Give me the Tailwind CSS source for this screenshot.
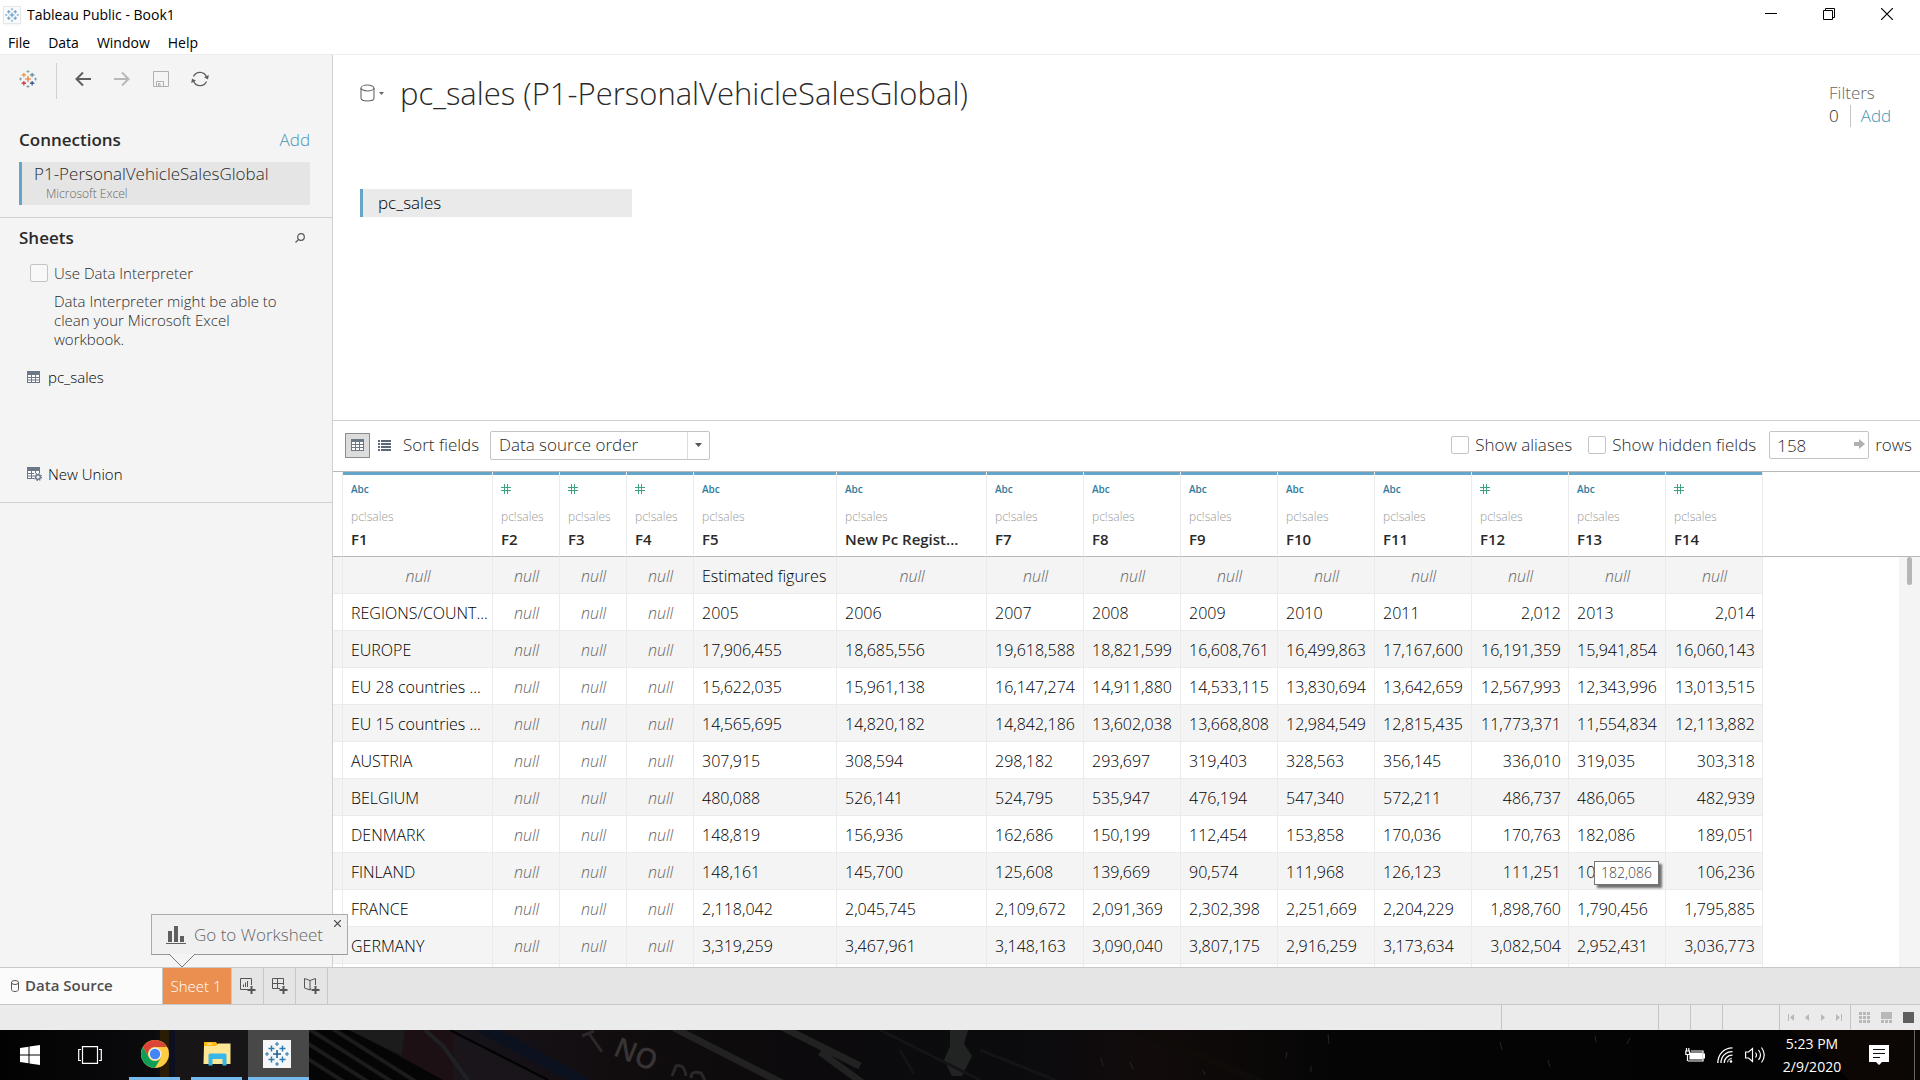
<!DOCTYPE html>
<html lang="en">
<head>
<meta charset="utf-8">
<meta name="viewport" content="width=device-width, initial-scale=1">
<title>Tableau Public - Book1</title>
<script src="https://cdn.jsdelivr.net/npm/@tailwindcss/browser@4"></script>
</head>
<body class="flex h-screen flex-col overflow-hidden bg-white font-['Open_Sans','Noto_Sans',sans-serif] font-[350] text-[#2a2a2a]">

<svg class="hidden" aria-hidden="true">
  <symbol id="marks" viewBox="0 0 24 24">
    <g fill="none">
      <path class="stroke-(--c1)" stroke-width="1.6" d="M12 8v8M8 12h8"/>
      <path class="stroke-(--c2)" stroke-width="1.4" d="M6.5 3.5v6M3.500 6.500h6"/>
      <path class="stroke-(--c3)" stroke-width="1.4" d="M17.500 3.500v6M14.500 6.500h6"/>
      <path class="stroke-(--c4)" stroke-width="1.4" d="M6.500 14.500v6M3.500 17.500h6"/>
      <path class="stroke-(--c5)" stroke-width="1.4" d="M17.500 14.500v6M14.500 17.500h6"/>
      <path class="stroke-(--c6)" stroke-width="1.1" d="M12 0v4M10 2h4M12 20v4M10 22h4M2 10v4M0 12h4M22 10v4M20 12h4"/>
    </g>
  </symbol>
</svg>

<!-- Title bar -->
<header class="flex h-7 shrink-0 items-center justify-between pl-[3px]">
  <div class="flex items-center gap-1.5 pt-0.5 text-sm font-normal text-black">
    <svg class="size-[18px] border border-gray-200 bg-gray-50 p-px shadow-xs [--c1:#4a8db8] [--c2:#4a8db8] [--c3:#4a8db8] [--c4:#4a8db8] [--c5:#4a8db8] [--c6:#6ba3c7]"><use href="#marks"/></svg>
    <h1>Tableau Public - Book1</h1>
  </div>
  <div class="flex text-black">
    <button aria-label="Minimize" class="flex h-7 w-[58px] items-center justify-center"><svg class="h-3 w-3" viewBox="0 0 12 12" stroke="currentColor" fill="none"><path d="M0 5.500h12"/></svg></button>
    <button aria-label="Restore" class="flex h-7 w-[58px] items-center justify-center"><svg class="h-3 w-3" viewBox="0 0 12 12" stroke="currentColor" fill="none"><path d="M.5 2.500h9v9h-9zM2.500 2.500v-2h9v9h-2"/></svg></button>
    <button aria-label="Close" class="flex h-7 w-[62px] items-center justify-center pr-1"><svg class="h-3 w-3" viewBox="0 0 12 12" stroke="currentColor" stroke-width="1.200" fill="none"><path d="M0 0l12 12M12 0L0 12"/></svg></button>
  </div>
</header>

<!-- Menu -->
<nav class="flex h-[27px] shrink-0 items-center gap-[18px] border-b border-[#ededed] pl-2 pt-1 text-sm font-normal text-black">
  <button>File</button><button>Data</button><button>Window</button><button>Help</button>
</nav>

<div class="flex min-h-0 flex-1">
  <!-- Sidebar -->
  <aside class="flex w-[333px] shrink-0 flex-col border-r border-[#d0d0d0] bg-[#f4f4f4]">
    <div class="flex h-12 items-center pl-[19px]">
      <button aria-label="Start page"><svg class="size-[18px] [--c1:#e8762c] [--c2:#eb912c] [--c3:#59879b] [--c4:#c72037] [--c5:#1f457e] [--c6:#7199a6]"><use href="#marks"/></svg></button>
      <span class="ml-[19px] mt-1 h-9 w-px bg-[#d0d0d0]"></span>
      <button aria-label="Back" class="ml-[18px]"><svg class="h-4 w-4" viewBox="0 0 16 16" fill="none" stroke="#5f5f5f" stroke-width="2"><path d="M16 8H1.500M8 1.500L1.500 8 8 14.500"/></svg></button>
      <button aria-label="Forward" class="ml-[23px]"><svg class="h-4 w-4" viewBox="0 0 16 16" fill="none" stroke="#b8b8b8" stroke-width="2"><path d="M0 8h14.500M8 1.500L14.500 8 8 14.500"/></svg></button>
      <button aria-label="Save" class="ml-[23px]"><svg class="h-4 w-4" viewBox="0 0 16 16" fill="none" stroke="#b0b0b0"><path d="M.5.5h15v15H.5zM3.500 15.500v-5h7v5M5.500 12.500h1.500v3H5.500z"/></svg></button>
      <button aria-label="Refresh" class="ml-[22px]"><svg class="h-4 w-[18px]" viewBox="0 0 18 16" fill="none" stroke="#5f5f5f" stroke-width="1.300"><path d="M2.500 5.500A7 7 0 0 1 15.500 6M15.500 10.500A7 7 0 0 1 2.500 10"/><path fill="#5f5f5f" stroke="none" d="M17.800 4l-.8 4.500-4-2.200zM.2 12l.8-4.500 4 2.200z"/></svg></button>
    </div>

    <section class="border-b border-[#d0d0d0] px-[19px] pb-3 pr-[22px] pt-6">
      <div class="flex items-center justify-between text-[17px] leading-[26px]">
        <h2 class="font-semibold">Connections</h2>
        <a href="#" class="text-[#4996b8]">Add</a>
      </div>
      <button class="mt-[9px] flex h-[43px] w-full flex-col border-l-[3px] border-[#65a5c9] bg-[#e5e5e5] pl-3 text-left">
        <span class="text-[17px] leading-6">P1-PersonalVehicleSalesGlobal</span>
        <span class="pl-3 text-xs leading-4 text-[#666]">Microsoft Excel</span>
      </button>
    </section>

    <section class="h-[285px] border-b border-[#d0d0d0] px-[19px] pt-[7px]">
      <div class="flex items-center justify-between pr-2">
        <h2 class="text-[17px] font-semibold leading-[26px]">Sheets</h2>
        <button aria-label="Search sheets"><svg class="h-[10px] w-[10px]" viewBox="0 0 10 10" fill="none" stroke="#555" stroke-width="1.200"><circle cx="6" cy="4" r="3.300"/><path d="M3.700 6.300L.5 9.500"/></svg></button>
      </div>
      <div class="mt-3 flex items-center gap-1.5 pl-[11px]">
        <input id="interp" type="checkbox" class="size-[18px] appearance-none rounded-xs border border-[#c4c4c4] bg-[#f8f8f8]">
        <label for="interp" class="text-[15px] leading-5">Use Data Interpreter</label>
      </div>
      <p class="mt-[9px] w-[270px] pl-[35px] text-[15px] leading-[19px]">Data Interpreter might be able to clean your Microsoft Excel workbook.</p>
      <button class="mt-[18px] flex items-center gap-2 pl-2 text-[15px] leading-5 text-black">
        <svg class="h-3 w-[13px]" viewBox="0 0 13 12"><path fill="#6b7787" d="M0 0h13v12H0z"/><path fill="#fff" d="M1 4h3v2H1zm4 0h3v2H5zm4 0h3v2H9zM1 7h3v1.500H1zm4 0h3v1.500H5zm4 0h3v1.500H9zM1 9.500h3V11H1zm4 0h3V11H5zm4 0h3V11H9z"/></svg>
        pc_sales
      </button>
      <button class="mt-[77px] flex items-center gap-1.5 pl-2 text-[15px] leading-5 text-black">
        <svg class="h-[14px] w-[15px]" viewBox="0 0 15 14"><path fill="#6b7787" d="M0 0h13v6H7v6H0z"/><path fill="#fff" d="M1 4h3v2H1zm4 0h3v2H5zm4 0h3v2H9zM1 7h3v1.500H1zm4 0h3v1.500H5zM1 9.500h3V11H1zm4 0h3V11H5z"/><circle cx="11" cy="10" r="3.800" fill="#f4f4f4"/><circle cx="11" cy="10" r="2.300" fill="none" stroke="#6b7787" stroke-width="1.400"/><circle cx="11" cy="10" r="3.400" fill="none" stroke="#6b7787" stroke-width="1.300" stroke-dasharray="1.300 1.370"/></svg>
        New Union
      </button>
    </section>
  </aside>

  <!-- Canvas and grid -->
  <main class="flex min-w-0 flex-1 flex-col">
    <section class="flex h-[366px] shrink-0 flex-col border-b border-[#d0d0d0] pl-[27px]">
      <div class="flex items-start justify-between pr-7 pt-4">
        <div class="flex items-center">
          <button aria-label="Data source menu" class="flex items-center gap-1">
            <svg class="h-[18px] w-[15px]" viewBox="0 0 15 18" fill="none" stroke="#666" stroke-width="1.100"><ellipse cx="7.500" cy="4" rx="6.500" ry="3"/><path d="M1 4v10c0 1.800 2.500 3 6.500 3s6.500-1.200 6.500-3V4"/></svg>
            <svg class="h-[3px] w-[5px]" viewBox="0 0 5 3"><path fill="#666" d="M0 0h5L2.500 3z"/></svg>
          </button>
          <h2 class="ml-4 text-[31px] leading-[44px]">pc_sales (P1-PersonalVehicleSalesGlobal)</h2>
        </div>
        <div class="mt-[10px] w-[63px] text-[17px] leading-[23px]">
          <div class="text-[#666]">Filters</div>
          <div class="flex items-center"><span>0</span><span class="ml-[11px] h-[22px] w-px bg-[#c4c4c4]"></span><a href="#" class="ml-2.5 text-[#4996b8]">Add</a></div>
        </div>
      </div>
      <button class="mt-[62px] h-7 w-[272px] border-l-[3px] border-[#65a5c9] bg-[#eaeaea] pl-[15px] text-left text-[17px] leading-7 text-black">pc_sales</button>
    </section>

    <div class="flex h-[51px] shrink-0 items-center justify-between border-b border-[#b8b8b8] pb-0.5 pl-3 pr-2 text-[17px]">
      <div class="flex items-center">
        <button aria-label="Grid view" class="flex size-[25px] items-center justify-center border border-[#8c8c8c] bg-[#dcdcdc]"><svg class="h-3 w-[13px]" viewBox="0 0 13 12"><path fill="#6b7787" d="M0 0h13v12H0z"/><path fill="#fff" d="M1 3h3v2H1zm4 0h3v2H5zm4 0h3v2H9zM1 6h3v2H1zm4 0h3v2H5zm4 0h3v2H9zM1 9h3v2H1zm4 0h3v2H5zm4 0h3v2H9z"/></svg></button>
        <button aria-label="List view" class="ml-2"><svg class="h-[11px] w-[13px]" viewBox="0 0 13 11" fill="#5c6878"><path d="M0 0h2v2H0zm3 0h10v2H3zM0 3h2v2H0zm3 0h10v2H3zM0 6h2v2H0zm3 0h10v2H3zM0 9h2v2H0zm3 0h10v2H3z"/></svg></button>
        <label for="sort" class="ml-3 w-[79px] whitespace-nowrap">Sort fields</label>
        <div class="relative ml-2">
          <select id="sort" class="h-[29px] w-[220px] appearance-none rounded-xs border border-[#c4c4c4] bg-white pl-2"><option>Data source order</option></select>
          <span class="pointer-events-none absolute inset-y-px right-px flex w-[22px] items-center justify-center border-l border-[#ddd]"><svg class="h-1 w-[7px]" viewBox="0 0 7 4"><path fill="#555" d="M0 0h7L3.500 4z"/></svg></span>
        </div>
      </div>
      <div class="flex items-center">
        <input id="aliases" type="checkbox" class="size-[18px] appearance-none rounded-xs border border-[#c4c4c4]">
        <label for="aliases" class="ml-1.5 w-[100px] whitespace-nowrap">Show aliases</label>
        <input id="hidden-fields" type="checkbox" class="ml-[13px] size-[18px] appearance-none rounded-xs border border-[#c4c4c4]">
        <label for="hidden-fields" class="ml-1.5 w-[145px] whitespace-nowrap">Show hidden fields</label>
        <div class="relative ml-3">
          <input id="rows" value="158" class="block h-7 w-[100px] rounded-xs border border-[#c4c4c4] pl-[7px]">
          <svg class="absolute right-1 top-2 h-[10px] w-[11px]" viewBox="0 0 11 10"><path fill="#b0b0b0" d="M0 3h5V0l6 5-6 5V7H0z"/></svg>
        </div>
        <label for="rows" class="ml-1.5">rows</label>
      </div>
    </div>

    <div class="relative min-h-0 flex-1 overflow-hidden">
      <table class="w-full table-fixed border-separate border-spacing-0">
        <colgroup><col class="w-[10px]"><col class="w-[150px]"><col class="w-[67px]"><col class="w-[67px]"><col class="w-[67px]"><col class="w-[143px]"><col class="w-[150px]"><col class="w-[97px]"><col class="w-[97px]"><col class="w-[97px]"><col class="w-[97px]"><col class="w-[97px]"><col class="w-[97px]"><col class="w-[97px]"><col class="w-[97px]"><col></colgroup>
        <thead><tr id="head"></tr></thead>
        <tbody id="body" class="text-base leading-5 text-black"></tbody>
      </table>
      <div class="absolute bottom-0 right-0 top-[85px] w-[21px] bg-[#f4f4f4]"><div class="ml-2 h-7 w-[5px] rounded-full bg-[#b5b5b5]"></div></div>
      <div role="tooltip" class="absolute left-[1261px] top-[389px] border border-[#767676] bg-white px-1.5 text-sm leading-[22px] text-[#444] shadow-[3px_3px_2px_#0008]">182,086</div>
    </div>
  </main>
</div>

<!-- Sheet tabs -->
<div class="relative flex h-[38px] shrink-0 border-y border-[#c8c8c8] bg-[#e5e5e5]">
  <button class="flex w-[163px] items-center gap-1.5 border-r border-[#c8c8c8] bg-[#fbfbfb] pb-px pl-[11px] text-[15px] font-semibold text-[#4f4f4f]">
    <svg class="h-3 w-2" viewBox="0 0 8 12" fill="none" stroke="#555"><ellipse cx="4" cy="2.500" rx="3.500" ry="2"/><path d="M.5 2.500v7c0 1 1 2 3.500 2s3.500-1 3.500-2v-7"/></svg>
    Data Source
  </button>
  <button class="w-[69px] border-r border-[#c8c8c8] bg-[#eb8f50] pr-0.5 text-[15px] text-white">Sheet 1</button>
  <button aria-label="New worksheet" class="flex w-8 items-center justify-center border-r border-[#c8c8c8]"><svg class="h-4 w-4" viewBox="0 0 16 16" fill="none" stroke="#555"><path d="M8 11.500H.5V.5h11V7M3.500 9V6.500M5.500 9V4.500M7.500 9V3"/><path stroke-width="2" d="M11.500 8v8M7.500 12h8"/></svg></button>
  <button aria-label="New dashboard" class="flex w-8 items-center justify-center border-r border-[#c8c8c8]"><svg class="h-4 w-4" viewBox="0 0 16 16" fill="none" stroke="#555"><path d="M8 10.500H.5V.5h11V7M.5 5.500h11M5.500.5v10"/><path stroke-width="2" d="M11.500 8v8M7.500 12h8"/></svg></button>
  <button aria-label="New story" class="flex w-8 items-center justify-center border-r border-[#c8c8c8]"><svg class="h-4 w-4" viewBox="0 0 16 16" fill="none" stroke="#555"><path d="M7 10.500L6 12 .5 10V.5L6 2.500 11.500.5V7M6 2.500V12"/><path stroke-width="2" d="M11.500 8v8M7.500 12h8"/></svg></button>

  <!-- Hint bubble -->
  <div class="absolute bottom-[49px] left-[151px] flex h-[41px] w-[197px] items-center border border-[#aaa] border-b-[#999] bg-[#f0f0f0]">
    <button class="flex items-center gap-2 pl-3.5 text-[17px] text-[#666]">
      <svg class="h-[18px] w-5" viewBox="0 0 20 18" fill="#5f5f5f"><path d="M2 5h4v11H2zM8 0h4v16H8zM14 10h4v6h-4zM0 17h20v1H0z"/></svg>
      Go to Worksheet
    </button>
    <button aria-label="Dismiss hint" class="absolute right-1.5 top-[5px]"><svg class="h-[7px] w-[7px]" viewBox="0 0 7 7" stroke="#444" stroke-width="1.200"><path d="M0 0l7 7M7 0L0 7"/></svg></button>
    <svg class="absolute left-4 top-[39px] h-[14px] w-[28px]" viewBox="0 0 28 14"><path fill="#f4f4f4" stroke="#777" d="M1 0l13 13L27 0"/></svg>
  </div>
</div>

<!-- Status bar -->
<footer class="flex h-[25px] shrink-0 justify-end bg-[#ebebeb]">
  <div class="w-[157px] border-l border-[#c4c4c4]"></div>
  <div class="w-8 border-l border-[#c4c4c4]"></div>
  <div class="w-8 border-l border-[#c4c4c4]"></div>
  <div class="w-[57px] border-l border-[#c4c4c4]"></div>
  <div class="flex w-[71px] items-center justify-between border-l border-[#c4c4c4] px-2 text-[#b8b8b8]">
    <button aria-label="First"><svg class="h-[7px] w-1.5" viewBox="0 0 6 7" fill="currentColor"><path d="M0 0h1v7H0zM6 0v7L2 3.500z"/></svg></button>
    <button aria-label="Previous"><svg class="h-[7px] w-1" viewBox="0 0 4 7" fill="currentColor"><path d="M4 0v7L0 3.500z"/></svg></button>
    <button aria-label="Next"><svg class="h-[7px] w-1" viewBox="0 0 4 7" fill="currentColor"><path d="M0 0v7l4-3.500z"/></svg></button>
    <button aria-label="Last"><svg class="h-[7px] w-1.5" viewBox="0 0 6 7" fill="currentColor"><path d="M5 0h1v7H5zM0 0v7l4-3.500z"/></svg></button>
  </div>
  <div class="flex w-[70px] items-center justify-between border-l border-[#c4c4c4] pl-2 pr-1.5">
    <button aria-label="Sheet sorter"><svg class="size-[11px]" viewBox="0 0 11 11" fill="#b8b8b8"><path d="M0 0h3v3H0zm4 0h3v3H4zm4 0h3v3H8zM0 4h3v3H0zm4 0h3v3H4zm4 0h3v3H8zM0 8h3v3H0zm4 0h3v3H4zm4 0h3v3H8z"/></svg></button>
    <button aria-label="Filmstrip"><svg class="size-[11px]" viewBox="0 0 11 11" fill="#b8b8b8"><path d="M0 0h11v7H0zM0 8h3v3H0zm4 0h3v3H4zm4 0h3v3H8z"/></svg></button>
    <button aria-label="Tabs" class="size-[11px] bg-[#5f5f5f]"></button>
  </div>
</footer>

<!-- Taskbar -->
<div class="relative flex h-[50px] shrink-0 items-stretch justify-between overflow-hidden bg-[#050506] text-white">
  <svg class="absolute inset-0 h-full w-full" viewBox="0 0 1920 50" preserveAspectRatio="xMidYMid slice" aria-hidden="true">
    <defs>
      <linearGradient id="wall" x2="1"><stop offset="0" stop-color="#020203"/><stop offset=".08" stop-color="#0b0a0c"/><stop offset=".09" stop-color="#181517"/><stop offset=".24" stop-color="#17131a"/><stop offset=".32" stop-color="#110d0f"/><stop offset=".42" stop-color="#0c0a0c"/><stop offset=".53" stop-color="#0b0b0e"/><stop offset=".6" stop-color="#120b0b"/><stop offset=".7" stop-color="#050505"/><stop offset="1" stop-color="#020202"/></linearGradient>
    </defs>
    <path fill="url(#wall)" d="M0 0h1920v50H0z"/>
    <path fill="#2a1c05" d="M160 0h9v50h-9z"/><path fill="#0c1020" d="M169 0h6v50h-6z"/>
    <path fill="#050505" d="M309 0h40l98 50H309z"/>
    <g stroke="#1c1b1c" stroke-width="4"><path d="M250-8l110 70M274-8l110 70M298-8l110 70M322-8l110 70"/></g>
    <path fill="#1c1c1c" d="M349 0h56l-2 26z"/>
    <path fill="#1d1014" d="M405 0h48v50h-10L401 27z"/><path fill="#19151b" d="M453 4l95 46h-95z"/>
    <path fill="none" stroke="#1f2125" stroke-width="4" d="M425 0l18 16 25 34"/>
    <path stroke="#020202" stroke-width="2" d="M450 0l98 50"/>
    <path stroke="#0c1120" stroke-width="12" d="M480-4l110 60"/>
    <g stroke="#232223" stroke-width="7" fill="none"><path d="M674-2l110 56M780-4l80 40M820 22l44 32"/></g>
    <g fill="none" stroke="#2b2829" stroke-width="3"><path d="M582 6l12-5M588 2l14 20M672 46l4-10q8-3 10 10M691 48q0-8 10-5l4 7"/></g>
    <text x="612" y="25" transform="rotate(22 612 25)" fill="#383435" font-size="28" font-weight="600">NO</text>
    <path fill="#222423" d="M950 0h18l-4 14 8 12-10 20h-10l-8-16 6-14z"/>
    <path stroke="#141417" stroke-width="3" d="M880 0l100 50M900 20l14 24M980 20l90 36"/>
    <path stroke="#0f0b08" stroke-width="8" d="M1130-4l140 60"/>
    <path stroke="#252525" d="M1101 28l2 8M1130 32l3 7M1203 40l2 5M1287 22l-1 6M1311 36v6M1328 4l1 10M1630 8l-3 6M1500 12l2 8M1548 30l2 7M1595 6l1 6"/>
    <path fill="#0c0605" d="M1790 0h130v50h-70z"/>
  </svg>

  <div class="relative flex">
    <button aria-label="Start" class="flex w-[60px] items-center justify-center"><svg class="size-5" viewBox="0 0 20 20" fill="#fff"><path d="M0 3l8.500-1.200v7.700H0zM9.500 1.600L20 0v9.500H9.500zM0 10.500h8.500v7.700L0 17zM9.500 10.500H20V20L9.500 18.400z"/></svg></button>
    <button aria-label="Task view" class="flex w-[60px] items-center justify-center"><svg class="h-[18px] w-6" viewBox="0 0 24 18" fill="none" stroke="#fff" stroke-width="1.200"><path d="M4.500.6h15v16.800h-15zM3 3.500H.7v11H3M21 3.500h2.300v11H21"/></svg></button>
    <button aria-label="Chrome" class="ml-[9px] flex w-[51px] items-center justify-center border-b-[3px] border-[#76b9ed]">
      <svg class="size-7" viewBox="0 0 28 28"><circle cx="14" cy="14" r="14" fill="#fc4"/><path fill="#db4437" d="M1.900 7A14 14 0 0 1 26.100 7H14a7 7 0 0 0-6.100 10.500z"/><path fill="#0f9d58" d="M1.900 7A14 14 0 0 0 14 28l6.100-10.500A7 7 0 0 1 7.900 17.500z"/><circle cx="14" cy="14" r="6.500" fill="#f1f1f1"/><circle cx="14" cy="14" r="5.200" fill="#4285f4"/></svg>
    </button>
    <button aria-label="File Explorer" class="ml-[11px] flex w-[51px] items-center justify-center border-b-[3px] border-[#76b9ed]">
      <svg class="h-6 w-7" viewBox="0 0 28 24"><path fill="#fdb913" d="M1 0h12l2 3h12v5H1z"/><path fill="#ffe694" d="M1 4h12l2-2.500h12.500V22H.5z"/><path fill="#fff6d0" d="M4 1.500h5v1H4z"/><path fill="#37b6e9" d="M5.500 13q0-1.500 1.500-1.500h15q1.500 0 1.500 1.500v10.500h-4V17h-10v6.500h-4z"/></svg>
    </button>
    <button aria-label="Tableau" class="ml-1.5 flex w-[61px] items-center justify-center border-b-[3px] border-[#76b9ed] bg-[#484848] pr-1">
      <svg class="size-7 bg-[#f4f6f8] p-0.5 [--c1:#1f6391] [--c2:#2f7aaa] [--c3:#2f7aaa] [--c4:#2f7aaa] [--c5:#2f7aaa] [--c6:#2f7aaa]"><use href="#marks"/></svg>
    </button>
  </div>

  <div class="relative flex items-center">
    <svg class="h-[14px] w-5" viewBox="0 0 20 14" fill="none" stroke="#fff" stroke-width="1.200"><path d="M3 13h15V3H6"/><path fill="#fff" d="M5 5h12v6H5zM18.500 6h1v4h-1z"/><path d="M2.500 7v6M.8 3h3.700v3.500H.8zM1.500 0v3M3.800 0v3"/></svg>
    <svg class="ml-3 h-4 w-4" viewBox="0 0 16 16" fill="none" stroke="#fff" stroke-width="1.300"><path d="M.8 16C1 7 7 1 15.500.8M4 16c0-6.500 4.500-11.300 11.500-11.300M7.200 16c0-4.500 3.300-7.800 8.300-7.800"/><path d="M10.500 15.500c0-2.200 2-4 4.500-4" opacity=".7"/><circle cx="14" cy="14.500" r="1.300" fill="#fff" stroke="none"/></svg>
    <svg class="ml-3 h-[18px] w-5" viewBox="0 0 20 18" fill="none" stroke="#fff" stroke-width="1.200"><path d="M.6 6h3L7.500 2.500v13L3.600 12h-3zM10.500 6.500q2 2.500 0 5M13.500 4q4 5 0 10M16.500 1.500q5.500 7.500 0 15"/></svg>
    <div class="ml-4 w-[62px] text-center text-sm font-normal leading-[23px]"><div>5:23 PM</div><div>2/9/2020</div></div>
    <button aria-label="Notifications" class="ml-[26px]"><svg class="h-5 w-5" viewBox="0 0 20 20"><path fill="#fff" d="M0 0h20v17h-7l-3 3-3-3H0z"/><path stroke="#111" stroke-width="1.200" d="M4 4.500h12M4 8.500h12M4 12.500h7"/></svg></button>
    <span class="ml-[25px] mr-[5px] h-full w-px bg-[#666]"></span>
  </div>
</div>

<script>
const columns = [
  ["F1", "t"], ["F2", "n"], ["F3", "n"], ["F4", "n"], ["F5", "t"], ["New Pc Regist...", "t"], ["F7", "t"],
  ["F8", "t"], ["F9", "t"], ["F10", "t"], ["F11", "t"], ["F12", "n"], ["F13", "t"], ["F14", "n"]
];
const rows = [
  ["", "Estimated figures", "", "", "", "", "", "", "", "", ""],
  ["REGIONS/COUNT...", "2005", "2006", "2007", "2008", "2009", "2010", "2011", "2,012", "2013", "2,014"],
  ["EUROPE", "17,906,455", "18,685,556", "19,618,588", "18,821,599", "16,608,761", "16,499,863", "17,167,600", "16,191,359", "15,941,854", "16,060,143"],
  ["EU 28 countries ...", "15,622,035", "15,961,138", "16,147,274", "14,911,880", "14,533,115", "13,830,694", "13,642,659", "12,567,993", "12,343,996", "13,013,515"],
  ["EU 15 countries ...", "14,565,695", "14,820,182", "14,842,186", "13,602,038", "13,668,808", "12,984,549", "12,815,435", "11,773,371", "11,554,834", "12,113,882"],
  ["AUSTRIA", "307,915", "308,594", "298,182", "293,697", "319,403", "328,563", "356,145", "336,010", "319,035", "303,318"],
  ["BELGIUM", "480,088", "526,141", "524,795", "535,947", "476,194", "547,340", "572,211", "486,737", "486,065", "482,939"],
  ["DENMARK", "148,819", "156,936", "162,686", "150,199", "112,454", "153,858", "170,036", "170,763", "182,086", "189,051"],
  ["FINLAND", "148,161", "145,700", "125,608", "139,669", "90,574", "111,968", "126,123", "111,251", "10", "106,236"],
  ["FRANCE", "2,118,042", "2,045,745", "2,109,672", "2,091,369", "2,302,398", "2,251,669", "2,204,229", "1,898,760", "1,790,456", "1,795,885"],
  ["GERMANY", "3,319,259", "3,467,961", "3,148,163", "3,090,040", "3,807,175", "2,916,259", "3,173,634", "3,082,504", "2,952,431", "3,036,773"],
  null
];
const hash = '<svg class="h-[10px] w-[10px]" viewBox="0 0 10 10" stroke="#3fa37c" fill="none"><path d="M3.500 0v10M6.500 0v10M0 3.500h10M0 6.500h10"/></svg>';
document.getElementById("head").innerHTML =
  '<td class="h-[85px] border-b border-r border-b-[#b8b8b8] border-r-[#ebebeb]"></td>' +
  columns.map(([name, type]) =>
    `<th scope="col" class="border-b border-r border-b-[#b8b8b8] border-r-[#ebebeb] p-0 text-left align-top"><div class="h-[3px] bg-[#65a5c9]"></div><div class="flex h-7 items-center pl-2 text-[10px] font-semibold text-[#317c9c]">${type === "n" ? hash : "Abc"}</div><div class="pl-2 pt-1 text-xs font-[350] leading-5 text-[#999]">pc!sales</div><div class="pl-2 pt-0.5 text-[15px] font-semibold leading-5">${name}</div></th>`).join("") +
  '<td class="border-b border-[#b8b8b8]"></td>';
const cell = "h-[37px] border-b border-r border-[#ebebeb] pt-px pb-0 pl-2 pr-[7px] whitespace-nowrap";
document.getElementById("body").innerHTML = rows.map((row, i) => {
  const stripe = i % 2 ? "bg-white" : "bg-[#f4f4f4]";
  const values = row ? [row[0], "", "", "", ...row.slice(1)] : columns.map(() => null);
  return `<tr><td class="${cell} ${stripe}"></td>` + values.map((v, c) => {
    const align = v === "" ? "text-center italic text-[#666]" : columns[c][1] === "n" ? "text-right" : "text-left";
    return `<td class="${cell} ${stripe} ${align}">${v === "" ? "null" : v ?? ""}</td>`;
  }).join("") + "<td></td></tr>";
}).join("");
</script>
</body>
</html>
